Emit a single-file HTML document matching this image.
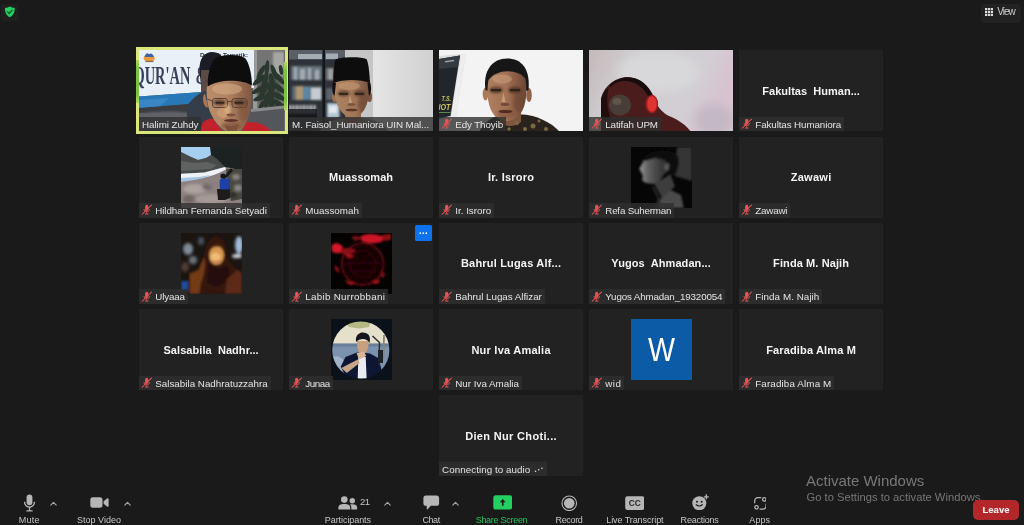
<!DOCTYPE html>
<html lang="id"><head><meta charset="utf-8"><title>Zoom Meeting</title>
<style>
html,body{margin:0;padding:0}
#w{position:absolute;left:0;top:0;width:1024px;height:525px;will-change:transform}
body{width:1024px;height:525px;overflow:hidden;background:#1a1a1a;position:relative;font-family:"Liberation Sans",sans-serif;color:#fff}
.tile{position:absolute;width:144.7px;height:81.2px;background:#222222;overflow:hidden}
.tile svg.pic{position:absolute;left:0;top:0}
.name{position:absolute;left:0;right:0;top:33.7px;height:14px;line-height:14px;text-align:center;font-weight:bold;font-size:11px;color:#f4f4f4;white-space:pre}
.lab{position:absolute;left:0;bottom:0;height:14.6px;line-height:16.6px;background:rgba(48,48,48,.8);font-size:9.8px;color:#e4e4e4;padding:0 3px 0 16.5px;white-space:nowrap}
.lab.nomic{padding-left:3.3px}
.lab svg.mic{position:absolute;left:2.3px;top:1.3px;width:11.4px;height:11.4px}
.av{position:absolute;left:42.2px;top:10.2px;width:61px;height:61px;overflow:hidden}
.tb{position:absolute;top:514.4px;height:12px;line-height:12px;font-size:9px;color:#c6c6c6;white-space:nowrap;transform:translateX(-50%)}
.ic{position:absolute}
</style></head><body><div id="w">
<div style="position:absolute;left:1px;top:4px;width:17px;height:17px;border-radius:3px;background:#202020"></div>
<svg class="ic" style="left:3.6px;top:6.3px" width="11.6" height="11.6" viewBox="0 0 24 24"><path d="M12 0.800C9.500 2.600 6 3.600 3 3.600C2.200 3.600 1.800 4 1.800 4.800C1.900 13 4.200 19.500 12 23.400C19.800 19.500 22.100 13 22.200 4.800C22.200 4 21.800 3.600 21 3.600C18 3.600 14.500 2.600 12 0.800z" fill="#23d160"/><path d="M7.300 12l3.500 3.500 6-7" fill="none" stroke="#155a30" stroke-width="2.700" stroke-linecap="round" stroke-linejoin="round"/></svg>
<div style="position:absolute;left:981px;top:3.5px;width:40px;height:19px;border-radius:4px;background:#222222"></div>
<svg class="ic" style="left:985px;top:8.2px" width="8.3" height="8" viewBox="0 0 8.300 8"><g fill="#dcdcdc"><rect x="0.0" y="0.0" width="2.300" height="2.200"/><rect x="3.0" y="0.0" width="2.300" height="2.200"/><rect x="6.0" y="0.0" width="2.300" height="2.200"/><rect x="0.0" y="2.9" width="2.300" height="2.200"/><rect x="3.0" y="2.9" width="2.300" height="2.200"/><rect x="6.0" y="2.9" width="2.300" height="2.200"/><rect x="0.0" y="5.8" width="2.300" height="2.200"/><rect x="3.0" y="5.8" width="2.300" height="2.200"/><rect x="6.0" y="5.8" width="2.300" height="2.200"/></g></svg>
<div style="position:absolute;left:997.2px;top:6.1px;height:12px;line-height:12px;font-size:10px;letter-spacing:-0.97px;color:#cfcfcf">View</div>
<div class="tile" style="left:138.75px;top:50.30px;width:146px;background:#6a6c6c"><svg class="pic" width="145" height="82" viewBox="0 0 145 82"><defs><filter id="b1a" x="-20%" y="-20%" width="140%" height="140%"><feGaussianBlur stdDeviation="0.5"/></filter><filter id="b1b" x="-20%" y="-20%" width="140%" height="140%"><feGaussianBlur stdDeviation="1.2"/></filter><filter id="b1c" x="-20%" y="-20%" width="140%" height="140%"><feGaussianBlur stdDeviation="2.2"/></filter>
<linearGradient id="g1f" x1="0" x2="1"><stop offset="0" stop-color="#ba8e6a"/><stop offset=".45" stop-color="#b18362"/><stop offset="1" stop-color="#805840"/></linearGradient><clipPath id="cf1"><path d="M68.500 33C66.500 44 68 56 72 64C76 72 82 80 90 82H100C106 78 110 68 111.500 58C113 48 113 40 112 33C100 27 80 27 68.500 33z"/></clipPath></defs>
<rect width="145" height="82" fill="#56585e"/>
<rect x="114" y="0" width="31" height="82" fill="#747474"/>
<rect x="134" y="2" width="11" height="24" fill="#a6a6a2" filter="url(#b1b)"/>
<rect x="114" y="0" width="4" height="60" fill="#9a9a98"/>
<path d="M0 0H115V38L63 42L0 46.500z" fill="#e9f0f7"/>
<path d="M0 46.500L63 42L50 54L0 58z" fill="#2878b8"/>
<path d="M0 50L30 48L20 57L0 58z" fill="#3a86c4"/>
<path d="M0 58L50 54L62 56V64L0 63z" fill="#3a3c42"/>
<path d="M0 64C20 60 45 61 62 65V82H0z" fill="#606268" filter="url(#b1b)"/>
<g filter="url(#b1a)" fill="#2b372e"><ellipse cx="122" cy="22" rx="8" ry="2.4" transform="rotate(-60 122 22)"/><ellipse cx="128" cy="18" rx="8" ry="2.2" transform="rotate(-85 128 18)"/><ellipse cx="135" cy="22" rx="8" ry="2.4" transform="rotate(-110 135 22)"/><ellipse cx="140" cy="28" rx="8" ry="2.5" transform="rotate(-130 140 28)"/><ellipse cx="120" cy="30" rx="8" ry="2.5" transform="rotate(-40 120 30)"/><ellipse cx="126" cy="30" rx="9" ry="2.6" transform="rotate(-75 126 30)"/><ellipse cx="133" cy="32" rx="9" ry="2.8" transform="rotate(-100 133 32)"/><ellipse cx="140" cy="38" rx="8" ry="2.6" transform="rotate(-140 140 38)"/><ellipse cx="119" cy="40" rx="7" ry="2.4" transform="rotate(-30 119 40)"/><ellipse cx="125" cy="40" rx="9" ry="2.8" transform="rotate(-60 125 40)"/><ellipse cx="132" cy="42" rx="9" ry="3" transform="rotate(-95 132 42)"/><ellipse cx="139" cy="46" rx="8" ry="2.8" transform="rotate(-150 139 46)"/><ellipse cx="121" cy="48" rx="7" ry="2.4" transform="rotate(-20 121 48)"/><ellipse cx="128" cy="50" rx="8" ry="3" transform="rotate(-80 128 50)"/><ellipse cx="136" cy="52" rx="8" ry="2.6" transform="rotate(-160 136 52)"/><ellipse cx="142" cy="20" rx="5" ry="2" transform="rotate(-100 142 20)"/><ellipse cx="124" cy="54" rx="6" ry="2.4" transform="rotate(-45 124 54)"/><ellipse cx="133" cy="56" rx="6" ry="2.4" transform="rotate(-120 133 56)"/><ellipse cx="141" cy="56" rx="5" ry="2.2" transform="rotate(-10 141 56)"/></g><g filter="url(#b1b)" fill="#2b372e" opacity=".55"><ellipse cx="130" cy="42" rx="12" ry="17"/></g>
<path d="M112 60L145 56V82H112z" fill="#54565c"/>
<path d="M112 59L145 55.500V58.500L112 62z" fill="#8a8a8c" filter="url(#b1a)"/>
<text x="-5.500" y="33.600" font-family="Liberation Serif,serif" font-size="24.700" font-weight="bold" fill="#364159" textLength="56.800" lengthAdjust="spacingAndGlyphs">QUR'AN</text>
<text x="56.500" y="33.600" font-family="Liberation Serif,serif" font-size="24.700" font-weight="bold" fill="#364159" textLength="13" lengthAdjust="spacingAndGlyphs">&amp;</text>
<text x="61" y="6.500" font-family="Liberation Sans,sans-serif" font-size="5.200" font-weight="bold" fill="#2e3444" textLength="48" lengthAdjust="spacingAndGlyphs">Daurah Tematik:</text>
<g filter="url(#b1a)"><ellipse cx="10.200" cy="8.300" rx="5.600" ry="3.600" fill="#e89a3c"/><path d="M5.500 7C6.500 3 9 2.500 10 4.500C11.500 2.500 14 3.500 15 7z" fill="#3c64a0"/><rect x="6.500" y="10.800" width="8" height="1.300" fill="#8a6a50"/></g>
<g filter="url(#b1a)">
<path d="M60.500 20C60 8 66 2 73 2C80 2 84 6 85 12V36H62z" fill="#1b1d25"/>
<path d="M62 20h10v22h-10z" fill="#5a4a44"/>
<path d="M47 82L48.500 55C54 48 60 43 66 41H74V82z" fill="#343c4a"/>
</g>
<g filter="url(#b1a)">
<path d="M61 82L63.500 73C66 70 71 68 74 69L84 82z" fill="#c4222c"/>
<path d="M103 82L107 72L117 72.500C124 74 130 78 133 82z" fill="#c4222c"/>
<path d="M66 44C64 44 63.500 50 65 54C66 57 68 58 69 57z" fill="#a87858"/>
<path d="M68.500 33C66.500 44 68 56 72 64C76 72 82 80 90 82H100C106 78 110 68 111.500 58C113 48 113 40 112 33C100 27 80 27 68.500 33z" fill="url(#g1f)"/>
<ellipse cx="88" cy="39" rx="15" ry="5.500" fill="#d4ac84" opacity=".6"/>
<ellipse cx="84" cy="63" rx="6" ry="5" fill="#d2a078" opacity=".7"/>
<path d="M68.500 36.500C68.600 25 71.500 12 76.500 8C84 4 100 4 106 8C110.500 13 113 26 113 35.500C103 29 80 29 68.500 36.500z" fill="#0b0b0f"/>
<path d="M86 75c4 1.500 9 1.500 13-.5L98 82H88z" fill="#7e5440"/>
</g>
<g fill="none" stroke="#4a3a34" stroke-width="1" opacity=".85"><rect x="73.500" y="48.500" width="15" height="9" rx="2.500"/><rect x="93" y="48.500" width="15" height="9" rx="2.500"/><path d="M88.500 51.500h4.500M73.500 51L68 49"/></g>
<g clip-path="url(#cf1)"><g filter="url(#b1b)"><ellipse cx="80.500" cy="52.500" rx="6.500" ry="3" fill="#4a2e22" opacity=".75"/><ellipse cx="100.500" cy="52.500" rx="6.500" ry="3" fill="#4a2e22" opacity=".75"/><ellipse cx="92" cy="76" rx="10" ry="4" fill="#7c4e38" opacity=".6"/><ellipse cx="104" cy="62" rx="5" ry="9" fill="#7a4e38" opacity=".45"/><ellipse cx="89" cy="60" rx="3" ry="5" fill="#e0b684" opacity=".7"/></g></g>
<g fill="#33221c" filter="url(#b1a)"><rect x="77" y="52" width="8" height="1.600"/><rect x="96" y="52" width="8" height="1.600"/><ellipse cx="92" cy="70.500" rx="7" ry="1.500" fill="#5e3226"/><ellipse cx="92" cy="65" rx="4.500" ry="1.400" fill="#7e523e"/></g>
</svg><div class="lab nomic" style="letter-spacing:-0.07px">Halimi Zuhdy</div></div>
<div class="tile" style="left:288.75px;top:50.30px"><svg class="pic" width="145" height="82" viewBox="0 0 145 82"><defs><filter id="b2a" x="-20%" y="-20%" width="140%" height="140%"><feGaussianBlur stdDeviation="0.5"/></filter><filter id="b2c" x="-20%" y="-20%" width="140%" height="140%"><feGaussianBlur stdDeviation="0.9"/></filter><filter id="b2b" x="-20%" y="-20%" width="140%" height="140%"><feGaussianBlur stdDeviation="1.2"/></filter>
<linearGradient id="g2" x1="0" x2="1"><stop offset="0" stop-color="#c4c4c4"/><stop offset=".3" stop-color="#dedede"/><stop offset=".6" stop-color="#e4e4e4"/><stop offset="1" stop-color="#d0d0d0"/></linearGradient>
<linearGradient id="g2f" x1="0" x2="1"><stop offset="0" stop-color="#ae8464"/><stop offset=".6" stop-color="#a07456"/><stop offset="1" stop-color="#70503c"/></linearGradient><clipPath id="cf2"><path d="M45 30C44 44 47 54 52 61C56 66 60 68 63 68C67 68 71 66 75 60C79 53 81.500 43 80.500 30C70 26 54 26 45 30z"/></clipPath></defs>
<rect width="145" height="82" fill="url(#g2)"/>
<rect x="55" y="0" width="29" height="82" fill="#c6c6c6"/>
<rect x="0" y="0" width="56" height="82" fill="#2e3238"/>
<rect x="0" y="0" width="56" height="9.500" fill="#5a5e66"/>
<g fill="#a4acb4" filter="url(#b2a)"><rect x="9" y="4" width="24" height="5"/><rect x="37" y="3.500" width="12" height="5.500"/></g>
<g filter="url(#b2c)">
<rect x="2" y="16" width="31" height="14" fill="#67727a"/><rect x="37" y="18" width="14" height="12" fill="#7e7a74"/>
<g fill="#a2acb4"><rect x="5" y="17" width="3" height="13"/><rect x="11" y="19" width="5" height="11"/><rect x="19" y="18" width="3" height="12"/><rect x="26" y="20" width="4" height="10"/><rect x="40" y="19" width="3" height="11"/></g>
<rect x="3" y="36" width="30" height="14" fill="#5e6a72"/>
<rect x="7" y="36" width="7" height="14" fill="#ab9670"/><rect x="14.500" y="37" width="6" height="13" fill="#5a88aa"/><rect x="22" y="38" width="10" height="12" fill="#c4ccd2"/><rect x="37" y="38" width="8" height="12" fill="#5a626a"/>
<g fill="#d4d8dc"><rect x="0" y="55" width="2" height="9"/><rect x="3.500" y="55" width="2" height="9"/><rect x="7" y="55" width="2" height="9"/><rect x="10.500" y="55" width="2" height="9"/><rect x="14" y="55" width="2" height="9"/><rect x="17.500" y="55" width="2" height="9"/><rect x="21" y="55" width="2" height="9"/><rect x="24.500" y="55" width="2" height="9"/></g>
<rect x="38" y="53" width="12.500" height="15" fill="#b4c6d2"/><rect x="40" y="56" width="8" height="7" fill="#e4eaee"/>
</g>
<rect x="0" y="59" width="28" height="9" fill="#0c0e10" opacity=".75"/>
<rect x="33.500" y="0" width="2.500" height="82" fill="#14161a"/>
<g filter="url(#b2a)">
<path d="M30 82C34 74 44 69 56 68H72C84 68 94 73 100 82z" fill="#8c8884"/>
<path d="M56 62h16v10C68 75 60 75 56 72z" fill="#966c50"/>
<ellipse cx="45.500" cy="47" rx="2.500" ry="5" fill="#9a7052"/><ellipse cx="80.500" cy="47" rx="2.500" ry="5" fill="#7a5640"/>
<path d="M45 30C44 44 47 54 52 61C56 66 60 68 63 68C67 68 71 66 75 60C79 53 81.500 43 80.500 30C70 26 54 26 45 30z" fill="url(#g2f)"/>
<ellipse cx="60" cy="36" rx="11" ry="4" fill="#c49872" opacity=".6"/>
<path d="M44.300 33C44.300 22 45 13 46.500 9.500C52 6.500 72 6.500 77.500 9C79.500 13 80.500 22 81 33C72 29 54 29 44.300 33z" fill="#0a0a0d"/>
<path d="M44 32C42.500 38 43.500 44 45.500 46L47 33z" fill="#14100e"/><path d="M81 32C83 38 82 44 80 46L78.500 33z" fill="#14100e"/>
</g>
<g clip-path="url(#cf2)"><g filter="url(#b2b)"><ellipse cx="54.500" cy="43.500" rx="6" ry="3" fill="#4a3024" opacity=".7"/><ellipse cx="70.500" cy="43.500" rx="6" ry="3" fill="#4a3024" opacity=".7"/><ellipse cx="74" cy="54" rx="5" ry="9" fill="#6a4430" opacity=".5"/></g></g>
<g fill="#2e201a" filter="url(#b2a)"><rect x="50" y="43" width="9" height="1.800"/><rect x="66" y="43" width="9" height="1.800"/><ellipse cx="62.500" cy="60" rx="6" ry="1.300" fill="#5a3428"/><ellipse cx="62.500" cy="54.500" rx="4" ry="1.300" fill="#7a523c"/><path d="M61 45L59.500 53h3.500z" fill="#c49a74"/></g>
</svg><div class="lab nomic" style="right:0;letter-spacing:-0.08px">M. Faisol_Humaniora UIN Mal...</div></div>
<div class="tile" style="left:438.75px;top:50.30px"><svg class="pic" width="145" height="82" viewBox="0 0 145 82"><defs><filter id="b3a" x="-20%" y="-20%" width="140%" height="140%"><feGaussianBlur stdDeviation="0.5"/></filter><filter id="b3b" x="-20%" y="-20%" width="140%" height="140%"><feGaussianBlur stdDeviation="1.2"/></filter>
<linearGradient id="g3f" x1="0" x2="1"><stop offset="0" stop-color="#ae7e60"/><stop offset=".5" stop-color="#a27054"/><stop offset="1" stop-color="#6c4534"/></linearGradient><clipPath id="cf3"><path d="M49.500 30C47 44 49 57 55 65C60 70 64 71 68 71C73 71 78 69 82 63C87 55 88.500 42 86.500 29C80 19 58 18 49.500 30z"/></clipPath></defs>
<rect width="145" height="82" fill="#f3f3f3"/>
<g filter="url(#b3a)">
<path d="M0 6L27 3.500L17 67L0 70z" fill="#dcdcdc"/>
<path d="M22 4L27 3.500L17 67L12 67z" fill="#ededed"/>
<path d="M0 9L21 5.500L11.500 66L0 68.500z" fill="#23282c"/>
<path d="M0 9L21 5.500L19 17L0 19z" fill="#353b40"/>
<rect x="6" y="11" width="9" height="1.500" fill="#9aa0a4" transform="rotate(-8 6 11)"/>
</g>
<text x="2.500" y="50.800" font-family="Liberation Sans,sans-serif" font-weight="bold" font-style="italic" font-size="8" fill="#c9c060" textLength="9.500" lengthAdjust="spacingAndGlyphs">T.S.</text>
<text x="-0.500" y="59.800" font-family="Liberation Sans,sans-serif" font-weight="bold" font-style="italic" font-size="8.500" fill="#c9c060" textLength="12" lengthAdjust="spacingAndGlyphs">IOT</text>
<rect x="0" y="62" width="11.500" height="1" fill="#5a8a4a"/>
<g filter="url(#b3a)">
<path d="M40 82C45 72 54 66 64 64.500H84C96 65 112 72 121 82z" fill="#2c231b"/>
<path d="M61 62h21v10C77 77 66 77 61 73z" fill="#7e543e"/>
<ellipse cx="46.500" cy="44" rx="2.800" ry="6.500" fill="#a87a5a"/><ellipse cx="90" cy="45" rx="2.800" ry="7" fill="#8e6448"/>
<path d="M46.500 40C43.500 20 54 8.500 68 8.500C82 8.500 91.500 18 89.500 40L80 44H56z" fill="#191817"/>
<path d="M49.500 30C47 44 49 57 55 65C60 70 64 71 68 71C73 71 78 69 82 63C87 55 88.500 42 86.500 29C80 19 58 18 49.500 30z" fill="url(#g3f)"/>
<ellipse cx="63" cy="29" rx="10" ry="4.500" fill="#c89c7c" opacity=".6"/>

</g>
<g clip-path="url(#cf3)"><g filter="url(#b3b)"><ellipse cx="57" cy="40" rx="7" ry="3.500" fill="#4a3024" opacity=".7"/><ellipse cx="76" cy="40" rx="7" ry="3.500" fill="#4a3024" opacity=".7"/><ellipse cx="80" cy="52" rx="6" ry="10" fill="#6a4430" opacity=".5"/><ellipse cx="67" cy="64" rx="9" ry="4" fill="#7c4e38" opacity=".5"/></g></g>
<g fill="#2e201a" filter="url(#b3a)"><rect x="52" y="39" width="10" height="2.200"/><rect x="71" y="39" width="10" height="2.200"/><ellipse cx="66.500" cy="61.500" rx="7" ry="1.600" fill="#522c22"/><ellipse cx="66" cy="54.500" rx="4.500" ry="1.400" fill="#70483a"/><path d="M64.500 42L62.500 52h4z" fill="#c49a74"/></g>
<g fill="#7a6844" filter="url(#b3a)"><circle cx="60" cy="76" r="2"/><circle cx="78" cy="73" r="2"/><circle cx="94" cy="76" r="2.500"/><circle cx="107" cy="79" r="2"/><circle cx="52" cy="79" r="1.500"/><circle cx="86" cy="79" r="2"/><circle cx="70" cy="79" r="1.800"/><circle cx="100" cy="71" r="1.500"/></g>
</svg><div class="lab" style="letter-spacing:-0.11px"><svg class="mic" viewBox="0 0 12 12" width="12" height="12"><g fill="#e25555"><rect x="4.300" y="0.900" width="3.400" height="6.200" rx="1.700"/><path d="M2.700 5.200h.9c0 1.500 1 2.500 2.400 2.500s2.400-1 2.400-2.500h.9c0 1.800-1.200 3.100-2.850 3.300V10.100h1.400v.9H4.150v-.9h1.400V8.500C3.900 8.300 2.700 7 2.700 5.200z"/></g><path d="M1.200 10.800L11 1.200" stroke="#e25555" stroke-width="1.100" stroke-linecap="round"/></svg>Edy Thoyib</div></div>
<div class="tile" style="left:588.75px;top:50.30px"><svg class="pic" width="145" height="82" viewBox="0 0 145 82"><defs><filter id="b4a" x="-20%" y="-20%" width="140%" height="140%"><feGaussianBlur stdDeviation="0.6"/></filter><filter id="b4b" x="-20%" y="-20%" width="140%" height="140%"><feGaussianBlur stdDeviation="5"/></filter>
<linearGradient id="g4" x1="0" x2="1" y1="0" y2=".25"><stop offset="0" stop-color="#c4b9ba"/><stop offset=".3" stop-color="#d0cdd0"/><stop offset=".8" stop-color="#d2ced4"/><stop offset="1" stop-color="#d8c2d0"/></linearGradient></defs>
<rect width="145" height="82" fill="url(#g4)"/>
<ellipse cx="70" cy="22" rx="40" ry="20" fill="#d8d8da" filter="url(#b4b)"/>
<ellipse cx="125" cy="70" rx="20" ry="16" fill="#c4b8c4" filter="url(#b4b)"/>
<g filter="url(#b4a)">
<path d="M12 82L12 50C13 40 22 29 36 27C50 26 60 36 65 47C68 56 72 62 80 66C90 70 98 76 102 82z" fill="#4b1c1e"/>
<path d="M12 70V50C13 44 16 40 20 37C17 46 18 58 22 70z" fill="#221010"/>
<path d="M20 36C28 27 42 25 52 31C58 35 62 41 64 47L60.500 48.500C56 38 46 31 36 31C30 31 25 33 22 37z" fill="#120c0c"/>
<ellipse cx="31" cy="55" rx="11" ry="10.500" fill="#4a3e38"/>
<ellipse cx="28" cy="51.500" rx="4.500" ry="3.500" fill="#605448"/>
<path d="M20 62C24 68 36 70 42 64L44 72H22z" fill="#3a2420"/>
<ellipse cx="62.800" cy="54" rx="6.300" ry="9.300" fill="#a01c20"/>
<ellipse cx="63" cy="54" rx="4.800" ry="7.800" fill="#dc3430"/>
</g>
</svg><div class="lab" style="letter-spacing:-0.12px"><svg class="mic" viewBox="0 0 12 12" width="12" height="12"><g fill="#e25555"><rect x="4.300" y="0.900" width="3.400" height="6.200" rx="1.700"/><path d="M2.700 5.200h.9c0 1.500 1 2.500 2.400 2.500s2.400-1 2.400-2.500h.9c0 1.800-1.200 3.100-2.850 3.300V10.100h1.400v.9H4.150v-.9h1.400V8.500C3.900 8.300 2.700 7 2.700 5.200z"/></g><path d="M1.200 10.800L11 1.200" stroke="#e25555" stroke-width="1.100" stroke-linecap="round"/></svg>Latifah UPM</div></div>
<div class="tile" style="left:738.75px;top:50.30px"><div class="name" style="letter-spacing:0.02px">Fakultas  Human...</div><div class="lab" style="letter-spacing:-0.10px"><svg class="mic" viewBox="0 0 12 12" width="12" height="12"><g fill="#e25555"><rect x="4.300" y="0.900" width="3.400" height="6.200" rx="1.700"/><path d="M2.700 5.200h.9c0 1.500 1 2.500 2.400 2.500s2.400-1 2.400-2.500h.9c0 1.800-1.200 3.100-2.850 3.300V10.100h1.400v.9H4.150v-.9h1.400V8.500C3.900 8.300 2.700 7 2.700 5.200z"/></g><path d="M1.200 10.800L11 1.200" stroke="#e25555" stroke-width="1.100" stroke-linecap="round"/></svg>Fakultas Humaniora</div></div>
<div class="tile" style="left:138.75px;top:136.55px"><div class="av"><svg width="61" height="61" viewBox="0 0 61 61"><defs><filter id="b5a" x="-20%" y="-20%" width="140%" height="140%"><feGaussianBlur stdDeviation="0.6"/></filter><filter id="b5b" x="-20%" y="-20%" width="140%" height="140%"><feGaussianBlur stdDeviation="1.5"/></filter></defs>
<rect width="61" height="61" fill="#867a78"/>
<g filter="url(#b5a)">
<path d="M0 0H30L30 8L25 11L17 13L9 9.600L0 5z" fill="#a6cef0"/>
<path d="M0 5L9 9.600L17 13L25 11L30 8L40 14L44 20L23 25.500L0 27z" fill="#464b4a"/>
<path d="M0 14L14 16L26 15L36 18L30 22L0 24z" fill="#5e6260"/>
<path d="M29 0H61V24L50 21L44 20L36 12L30 8z" fill="#1b2321"/>
<path d="M0 26.700L23.400 25.500L44 20L45.400 22.400L35.600 28L17.300 32.200L0 33.600z" fill="#eef2f6"/>
<path d="M0 31L18 30L30 28L17.300 33.500L0 35.500z" fill="#a4c4e2"/>
<path d="M0 35C14 33 30 31 46 22L61 24V61H0z" fill="#8c8081"/>
<path d="M45 22L61 22V52L50 54L47 40z" fill="#4a4643"/>
<path d="M50 21L43.500 29L41 31L44 32L52 24z" fill="#141a1a"/>
</g>
<g filter="url(#b5b)"><ellipse cx="14" cy="42" rx="12" ry="5" fill="#ada29e"/><ellipse cx="30" cy="52" rx="16" ry="5" fill="#a69a96"/><ellipse cx="8" cy="52" rx="6" ry="4" fill="#6e6662"/><ellipse cx="26" cy="40" rx="5" ry="3" fill="#70686a"/><ellipse cx="55" cy="30" rx="4" ry="3" fill="#8a8680"/><ellipse cx="57" cy="41" rx="4" ry="3.500" fill="#8c8884"/><ellipse cx="52" cy="48" rx="4" ry="3" fill="#2e2c2a"/></g>
<g filter="url(#b5a)">
<path d="M36 42h13v9L44 53H37z" fill="#1c1c1e"/>
<rect x="38.700" y="31.500" width="10.300" height="11" rx="2.500" fill="#1e40a4"/>
<circle cx="42" cy="29" r="2.600" fill="#14171a"/>
</g></svg></div><div class="lab" style="letter-spacing:-0.07px"><svg class="mic" viewBox="0 0 12 12" width="12" height="12"><g fill="#e25555"><rect x="4.300" y="0.900" width="3.400" height="6.200" rx="1.700"/><path d="M2.700 5.200h.9c0 1.500 1 2.500 2.400 2.500s2.400-1 2.400-2.500h.9c0 1.800-1.200 3.100-2.850 3.300V10.100h1.400v.9H4.150v-.9h1.400V8.500C3.900 8.300 2.700 7 2.700 5.200z"/></g><path d="M1.200 10.800L11 1.200" stroke="#e25555" stroke-width="1.100" stroke-linecap="round"/></svg>Hildhan Fernanda Setyadi</div></div>
<div class="tile" style="left:288.75px;top:136.55px"><div class="name" style="letter-spacing:0.05px">Muassomah</div><div class="lab" style="letter-spacing:0.05px"><svg class="mic" viewBox="0 0 12 12" width="12" height="12"><g fill="#e25555"><rect x="4.300" y="0.900" width="3.400" height="6.200" rx="1.700"/><path d="M2.700 5.200h.9c0 1.500 1 2.500 2.400 2.500s2.400-1 2.400-2.500h.9c0 1.800-1.200 3.100-2.850 3.300V10.100h1.400v.9H4.150v-.9h1.400V8.500C3.900 8.300 2.700 7 2.700 5.200z"/></g><path d="M1.200 10.800L11 1.200" stroke="#e25555" stroke-width="1.100" stroke-linecap="round"/></svg>Muassomah</div></div>
<div class="tile" style="left:438.75px;top:136.55px"><div class="name" style="letter-spacing:0.24px">Ir. Isroro</div><div class="lab" style="letter-spacing:0.00px"><svg class="mic" viewBox="0 0 12 12" width="12" height="12"><g fill="#e25555"><rect x="4.300" y="0.900" width="3.400" height="6.200" rx="1.700"/><path d="M2.700 5.200h.9c0 1.500 1 2.500 2.400 2.500s2.400-1 2.400-2.500h.9c0 1.800-1.200 3.100-2.850 3.300V10.100h1.400v.9H4.150v-.9h1.400V8.500C3.900 8.300 2.700 7 2.700 5.200z"/></g><path d="M1.200 10.800L11 1.200" stroke="#e25555" stroke-width="1.100" stroke-linecap="round"/></svg>Ir. Isroro</div></div>
<div class="tile" style="left:588.75px;top:136.55px"><div class="av"><svg width="61" height="61" viewBox="0 0 61 61"><defs><filter id="b6a" x="-20%" y="-20%" width="140%" height="140%"><feGaussianBlur stdDeviation="1.1"/></filter><filter id="b6b" x="-20%" y="-20%" width="140%" height="140%"><feGaussianBlur stdDeviation="2.2"/></filter>
<linearGradient id="g6" x1="0" x2="1"><stop offset="0" stop-color="#949494"/><stop offset=".3" stop-color="#5e5e5e"/><stop offset=".7" stop-color="#3a3a3a"/><stop offset="1" stop-color="#2c2c2c"/></linearGradient></defs>
<rect width="61" height="61" fill="#060606"/>
<g filter="url(#b6a)">
<path d="M46 0H61V34L44 29z" fill="#363636"/>
<path d="M14.300 10.900L21 7.800L30.700 10.200L35.600 12.700L39.300 17.600L38 23.700L33.200 27.300L28.300 34.600L23.400 37L14.900 35.900L11.200 33.400L11.800 28.500L8.200 21.800L10.600 17.600z" fill="url(#g6)"/>
<path d="M23.400 37L39.300 27.300L44 39.500L30.700 50.500z" fill="#3c3c3c"/>
<path d="M29.500 51.700L39.300 43L50 48L52.700 61H27z" fill="#4c4c4c"/>
<ellipse cx="35.600" cy="20" rx="2.400" ry="3.400" fill="#565656"/>
<path d="M11 14C15 3 34 0 44 6C50 10 48 22 43 30L39 26L40 18L33 13L24 11L15 14z" fill="#080808"/>
<path d="M22 40L28 52L24 61" stroke="#6a6a6a" stroke-width=".8" fill="none"/>
</g></svg></div><div class="lab" style="letter-spacing:-0.20px"><svg class="mic" viewBox="0 0 12 12" width="12" height="12"><g fill="#e25555"><rect x="4.300" y="0.900" width="3.400" height="6.200" rx="1.700"/><path d="M2.700 5.200h.9c0 1.500 1 2.500 2.400 2.500s2.400-1 2.400-2.500h.9c0 1.800-1.200 3.100-2.850 3.300V10.100h1.400v.9H4.150v-.9h1.400V8.500C3.900 8.300 2.700 7 2.700 5.200z"/></g><path d="M1.200 10.800L11 1.200" stroke="#e25555" stroke-width="1.100" stroke-linecap="round"/></svg>Refa Suherman</div></div>
<div class="tile" style="left:738.75px;top:136.55px"><div class="name" style="letter-spacing:0.30px">Zawawi</div><div class="lab" style="letter-spacing:-0.20px"><svg class="mic" viewBox="0 0 12 12" width="12" height="12"><g fill="#e25555"><rect x="4.300" y="0.900" width="3.400" height="6.200" rx="1.700"/><path d="M2.700 5.200h.9c0 1.500 1 2.500 2.400 2.500s2.400-1 2.400-2.500h.9c0 1.800-1.200 3.100-2.850 3.300V10.100h1.400v.9H4.150v-.9h1.400V8.500C3.900 8.300 2.700 7 2.700 5.200z"/></g><path d="M1.200 10.800L11 1.200" stroke="#e25555" stroke-width="1.100" stroke-linecap="round"/></svg>Zawawi</div></div>
<div class="tile" style="left:138.75px;top:222.80px"><div class="av"><svg width="61" height="61" viewBox="0 0 61 61"><defs><filter id="b7a" x="-20%" y="-20%" width="140%" height="140%"><feGaussianBlur stdDeviation="0.8"/></filter><filter id="b7b" x="-20%" y="-20%" width="140%" height="140%"><feGaussianBlur stdDeviation="1.800"/></filter></defs>
<rect width="61" height="61" fill="#1a1511"/>
<g filter="url(#b7b)">
<ellipse cx="7" cy="16" rx="5" ry="6" fill="#7e8a98"/><ellipse cx="12" cy="27" rx="4" ry="4" fill="#6a7078"/><ellipse cx="4" cy="34" rx="4" ry="5" fill="#4e3a30"/>
<ellipse cx="58" cy="12" rx="4" ry="9" fill="#a0bcdc"/><ellipse cx="56" cy="23" rx="5" ry="2" fill="#d4dce4"/><ellipse cx="20" cy="8" rx="3" ry="4" fill="#46525c"/>
</g>
<g filter="url(#b7a)">
<rect x="0" y="48" width="7" height="10" fill="#1e4c9c"/>
<path d="M35.600 3.500C42 5 44.500 10 45 17C46 26 48 31 56 36L61 39.500V61H7.500V39.500L17.500 36L23.500 21C25 11 29 4 35.600 3.500z" fill="#35190c"/>
<path d="M9 61V41L17.500 37L23 24C25 30 24 40 20 50L18 61z" fill="#733a16"/>
<path d="M27 30C32 36 42 36 47 31L50 46L36 54L26 50z" fill="#26110a"/>
<path d="M44 61L46 46L56 37L61 40V61z" fill="#5c2c18"/>
<ellipse cx="35.600" cy="22.300" rx="7.300" ry="9.300" fill="#d89850"/>
<ellipse cx="34.500" cy="25" rx="5" ry="5.500" fill="#f0bc74"/>
<path d="M28 18C29 9 42 8 43.500 17C40 12.500 32 12.500 28 18z" fill="#4a2410"/>
<path d="M31 27.500c2.500 2 6 2 8.500-.3" stroke="#a83c30" stroke-width="1.100" fill="none"/>
</g></svg></div><div class="lab" style="letter-spacing:-0.16px"><svg class="mic" viewBox="0 0 12 12" width="12" height="12"><g fill="#e25555"><rect x="4.300" y="0.900" width="3.400" height="6.200" rx="1.700"/><path d="M2.700 5.200h.9c0 1.500 1 2.500 2.400 2.500s2.400-1 2.400-2.500h.9c0 1.800-1.200 3.100-2.850 3.300V10.100h1.400v.9H4.150v-.9h1.400V8.500C3.900 8.300 2.700 7 2.700 5.200z"/></g><path d="M1.200 10.800L11 1.200" stroke="#e25555" stroke-width="1.100" stroke-linecap="round"/></svg>Ulyaaa</div></div>
<div class="tile" style="left:288.75px;top:222.80px"><div class="av"><svg width="61" height="61" viewBox="0 0 61 61"><defs><filter id="b8a" x="-20%" y="-20%" width="140%" height="140%"><feGaussianBlur stdDeviation="1"/></filter></defs>
<rect width="61" height="61" fill="#050202"/>
<g filter="url(#b8a)">
<circle cx="31.700" cy="31" r="21" fill="#160305" stroke="#5a0c13" stroke-width="1.600"/>
<circle cx="31.700" cy="31" r="13" fill="none" stroke="#3a080c" stroke-width="1.200"/>
<path d="M14 30h35M18 38h27" stroke="#3a080c" stroke-width="1"/>
<path d="M0.500 14C1 10 6 9.500 9 11.500C12 12 12.500 16 11 19C8 21 3 20.500 1 18z" fill="#d4182a"/>
<path d="M10 16C16 14 22 15 25 18C22 21 14 22 10 20z" fill="#8c1019"/>
<path d="M14 21C18 20 22 21 23 24L17 25z" fill="#a0141e"/>
<path d="M29 4C34 0 44 0.500 50 3C54 5 53 9 48 9.500C42 11 35 10 31 8z" fill="#ca1627"/>
<path d="M20 4C24 2 29 3 31 6L24 8z" fill="#7c0e16"/>
<path d="M50 2L60 1V7L53 8z" fill="#8e1019"/>
<path d="M3.500 32C7 33 9 37 8 40L4.500 38z" fill="#861019"/>
<path d="M14 47C18 49 22 50 24 49L22 52C18 52 15 50 14 47z" fill="#a6141f"/>
<path d="M41 48C44 48 47 47 48 46L48 50C45 52 42 51 41 48z" fill="#a6141f"/>
<path d="M50 38L54 40L53 45L50 44z" fill="#76101a"/>
</g></svg></div><div class="lab" style="letter-spacing:0.30px"><svg class="mic" viewBox="0 0 12 12" width="12" height="12"><g fill="#e25555"><rect x="4.300" y="0.900" width="3.400" height="6.200" rx="1.700"/><path d="M2.700 5.200h.9c0 1.500 1 2.500 2.400 2.500s2.400-1 2.400-2.500h.9c0 1.800-1.200 3.100-2.850 3.300V10.100h1.400v.9H4.150v-.9h1.400V8.500C3.900 8.300 2.700 7 2.700 5.200z"/></g><path d="M1.200 10.800L11 1.200" stroke="#e25555" stroke-width="1.100" stroke-linecap="round"/></svg>Labib Nurrobbani</div><div style="position:absolute;left:126.5px;top:2.4px;width:16.5px;height:16.3px;border-radius:1.5px;background:#0e72ed"><svg width="16.5" height="16.3" viewBox="0 0 16.500 16.300"><g fill="#fff"><circle cx="5.200" cy="8.200" r=".85"/><circle cx="8.250" cy="8.200" r=".85"/><circle cx="11.300" cy="8.200" r=".85"/></g></svg></div></div>
<div class="tile" style="left:438.75px;top:222.80px"><div class="name" style="letter-spacing:0.18px">Bahrul Lugas Alf...</div><div class="lab" style="letter-spacing:-0.03px"><svg class="mic" viewBox="0 0 12 12" width="12" height="12"><g fill="#e25555"><rect x="4.300" y="0.900" width="3.400" height="6.200" rx="1.700"/><path d="M2.700 5.200h.9c0 1.500 1 2.500 2.400 2.500s2.400-1 2.400-2.500h.9c0 1.800-1.200 3.100-2.850 3.300V10.100h1.400v.9H4.150v-.9h1.400V8.500C3.900 8.300 2.700 7 2.700 5.200z"/></g><path d="M1.200 10.800L11 1.200" stroke="#e25555" stroke-width="1.100" stroke-linecap="round"/></svg>Bahrul Lugas Alfizar</div></div>
<div class="tile" style="left:588.75px;top:222.80px"><div class="name" style="letter-spacing:0.09px">Yugos  Ahmadan...</div><div class="lab" style="letter-spacing:-0.15px"><svg class="mic" viewBox="0 0 12 12" width="12" height="12"><g fill="#e25555"><rect x="4.300" y="0.900" width="3.400" height="6.200" rx="1.700"/><path d="M2.700 5.200h.9c0 1.500 1 2.500 2.400 2.500s2.400-1 2.400-2.500h.9c0 1.800-1.200 3.100-2.850 3.300V10.100h1.400v.9H4.150v-.9h1.400V8.500C3.900 8.300 2.700 7 2.700 5.200z"/></g><path d="M1.200 10.800L11 1.200" stroke="#e25555" stroke-width="1.100" stroke-linecap="round"/></svg>Yugos Ahmadan_19320054</div></div>
<div class="tile" style="left:738.75px;top:222.80px"><div class="name" style="letter-spacing:0.10px">Finda M. Najih</div><div class="lab" style="letter-spacing:0.07px"><svg class="mic" viewBox="0 0 12 12" width="12" height="12"><g fill="#e25555"><rect x="4.300" y="0.900" width="3.400" height="6.200" rx="1.700"/><path d="M2.700 5.200h.9c0 1.500 1 2.500 2.400 2.500s2.400-1 2.400-2.500h.9c0 1.800-1.200 3.100-2.850 3.300V10.100h1.400v.9H4.150v-.9h1.400V8.500C3.900 8.300 2.700 7 2.700 5.200z"/></g><path d="M1.200 10.800L11 1.200" stroke="#e25555" stroke-width="1.100" stroke-linecap="round"/></svg>Finda M. Najih</div></div>
<div class="tile" style="left:138.75px;top:309.05px"><div class="name" style="letter-spacing:0.06px">Salsabila  Nadhr...</div><div class="lab" style="letter-spacing:0.01px"><svg class="mic" viewBox="0 0 12 12" width="12" height="12"><g fill="#e25555"><rect x="4.300" y="0.900" width="3.400" height="6.200" rx="1.700"/><path d="M2.700 5.200h.9c0 1.500 1 2.500 2.400 2.500s2.400-1 2.400-2.500h.9c0 1.800-1.200 3.100-2.850 3.300V10.100h1.400v.9H4.150v-.9h1.400V8.500C3.900 8.300 2.700 7 2.700 5.200z"/></g><path d="M1.200 10.800L11 1.200" stroke="#e25555" stroke-width="1.100" stroke-linecap="round"/></svg>Salsabila Nadhratuzzahra</div></div>
<div class="tile" style="left:288.75px;top:309.05px"><div class="av"><svg width="61" height="61" viewBox="0 0 61 61"><defs><filter id="b9a" x="-20%" y="-20%" width="140%" height="140%"><feGaussianBlur stdDeviation="0.6"/></filter><clipPath id="c9"><circle cx="29.800" cy="31" r="28.600"/></clipPath></defs>
<rect width="61" height="61" fill="#0b1119"/>
<g clip-path="url(#c9)"><g filter="url(#b9a)">
<rect width="61" height="25" fill="#e4e0cc"/>
<path d="M14 2H40L38 8L28 9.500L18 8z" fill="#b6b884"/>
<rect y="24.600" width="61" height="37" fill="#7a92ae"/>
<rect y="24.600" width="61" height="3" fill="#687f9a"/>
<path d="M0 38C6 36 12 38 14 44L10 56L0 56z" fill="#9fb2c6"/>
<path d="M9.700 47.800L14.500 38L26.700 33.200L39 34.400L47.500 39.300L51 52.700L39 61H17z" fill="#0c1230"/>
<path d="M27.300 38h7.400l1 23h-9z" fill="#e8ecf0"/>
<path d="M10.300 49L26.700 40.500L28.600 44L15.800 54z" fill="#c8a488"/>
<path d="M26 22C26 33 29 35 31.500 35C35 35 37.700 31 37.700 22z" fill="#c8a080"/>
<path d="M25 23C24 15 30 13 33 13.700C38 14 40 18 38.500 24C36 19 29 19 25 23z" fill="#12161e"/>
<path d="M25.500 34L33 32.500L35.300 37L28 40.500z" fill="#d8b498"/>
<path d="M41.500 17L48.500 23.500L48 46" stroke="#2e2e28" stroke-width="1.500" fill="none"/>
<path d="M53 16L52.500 40" stroke="#8a8478" stroke-width="1.800" fill="none"/>
<rect x="47" y="31" width="5" height="13" fill="#1c2028"/>
</g></g></svg></div><div class="lab" style="letter-spacing:-0.43px"><svg class="mic" viewBox="0 0 12 12" width="12" height="12"><g fill="#e25555"><rect x="4.300" y="0.900" width="3.400" height="6.200" rx="1.700"/><path d="M2.700 5.200h.9c0 1.500 1 2.500 2.400 2.500s2.400-1 2.400-2.500h.9c0 1.800-1.200 3.100-2.850 3.300V10.100h1.400v.9H4.150v-.9h1.400V8.500C3.900 8.300 2.700 7 2.700 5.200z"/></g><path d="M1.200 10.800L11 1.200" stroke="#e25555" stroke-width="1.100" stroke-linecap="round"/></svg>Junaa</div></div>
<div class="tile" style="left:438.75px;top:309.05px"><div class="name" style="letter-spacing:0.24px">Nur Iva Amalia</div><div class="lab" style="letter-spacing:0.00px"><svg class="mic" viewBox="0 0 12 12" width="12" height="12"><g fill="#e25555"><rect x="4.300" y="0.900" width="3.400" height="6.200" rx="1.700"/><path d="M2.700 5.200h.9c0 1.500 1 2.500 2.400 2.500s2.400-1 2.400-2.500h.9c0 1.800-1.200 3.100-2.850 3.300V10.100h1.400v.9H4.150v-.9h1.400V8.500C3.900 8.300 2.700 7 2.700 5.200z"/></g><path d="M1.200 10.800L11 1.200" stroke="#e25555" stroke-width="1.100" stroke-linecap="round"/></svg>Nur Iva Amalia</div></div>
<div class="tile" style="left:588.75px;top:309.05px"><div class="av"><svg width="61" height="61" viewBox="0 0 61 61"><rect width="61" height="61" fill="#0c5ba7"/><text x="30.500" y="42" text-anchor="middle" font-family="Liberation Sans,sans-serif" font-size="33" fill="#fff" textLength="27" lengthAdjust="spacingAndGlyphs">W</text></svg></div><div class="lab" style="letter-spacing:0.45px"><svg class="mic" viewBox="0 0 12 12" width="12" height="12"><g fill="#e25555"><rect x="4.300" y="0.900" width="3.400" height="6.200" rx="1.700"/><path d="M2.700 5.200h.9c0 1.500 1 2.500 2.400 2.500s2.400-1 2.400-2.500h.9c0 1.800-1.200 3.100-2.850 3.300V10.100h1.400v.9H4.150v-.9h1.400V8.500C3.900 8.300 2.700 7 2.700 5.200z"/></g><path d="M1.200 10.800L11 1.200" stroke="#e25555" stroke-width="1.100" stroke-linecap="round"/></svg>wid</div></div>
<div class="tile" style="left:738.75px;top:309.05px"><div class="name" style="letter-spacing:0.15px">Faradiba Alma M</div><div class="lab" style="letter-spacing:0.14px"><svg class="mic" viewBox="0 0 12 12" width="12" height="12"><g fill="#e25555"><rect x="4.300" y="0.900" width="3.400" height="6.200" rx="1.700"/><path d="M2.700 5.200h.9c0 1.500 1 2.500 2.400 2.500s2.400-1 2.400-2.500h.9c0 1.800-1.200 3.100-2.850 3.300V10.100h1.400v.9H4.150v-.9h1.400V8.500C3.900 8.300 2.700 7 2.700 5.200z"/></g><path d="M1.200 10.800L11 1.200" stroke="#e25555" stroke-width="1.100" stroke-linecap="round"/></svg>Faradiba Alma M</div></div>
<div class="tile" style="left:438.75px;top:395.30px"><div class="name" style="letter-spacing:0.33px">Dien Nur Choti...</div><div class="lab nomic" style="letter-spacing:0.06px">Connecting to audio<svg width="13" height="8" viewBox="0 0 13 8" style="margin-left:1px"><g fill="#e4e4e4"><circle cx="4.500" cy="6.300" r=".8"/><circle cx="7.700" cy="4.800" r=".8"/><circle cx="10.900" cy="3.300" r=".8"/></g></svg></div></div>
<div style="position:absolute;left:135.6px;top:46.8px;width:146px;height:81.2px;border:3px solid #dbe67c"></div>
<div style="position:absolute;left:135.6px;top:60px;width:3px;height:43px;background:linear-gradient(#b4d860,#7cc242 20%,#7cc242 80%,#b4d860)"></div><div style="position:absolute;left:283.6px;top:62px;width:3px;height:48px;background:linear-gradient(#b4d860,#7cc242 20%,#7cc242 80%,#b4d860)"></div>
<svg class="ic" style="left:22.800px;top:493.600px" width="13" height="18.200" viewBox="0 0 13 18.200"><g fill="#b6b6b6"><rect x="3.600" y="0.400" width="5.800" height="10.800" rx="2.900"/><path d="M0.900 7.800h1.300c0 2.900 1.900 4.700 4.300 4.700s4.300-1.800 4.300-4.700h1.300c0 3.300-2.100 5.500-4.950 5.900V16.300h2.500v1.300H3.350v-1.300h2.500V13.700C3 13.300 0.900 11.100 0.900 7.800z"/></g></svg>
<svg class="ic" style="left:49.8px;top:500.6px" width="7" height="5" viewBox="0 0 7 5"><path d="M0.800 4.100L3.500 1.300L6.200 4.100" fill="none" stroke="#a6a6a6" stroke-width="1.150" stroke-linecap="round" stroke-linejoin="round"/></svg><div class="tb" style="left:29.3px;letter-spacing:0.33px">Mute</div>
<svg class="ic" style="left:90px;top:497.300px" width="19" height="11" viewBox="0 0 19 11"><g fill="#b6b6b6"><rect x="0.300" y="0.300" width="12.200" height="10.400" rx="2.600"/><path d="M13.600 4.200L17.300 1.300C17.900 0.900 18.600 1.300 18.600 2V9C18.600 9.700 17.900 10.100 17.300 9.700L13.600 6.800z"/></g></svg>
<svg class="ic" style="left:124.2px;top:500.6px" width="7" height="5" viewBox="0 0 7 5"><path d="M0.800 4.100L3.500 1.300L6.200 4.100" fill="none" stroke="#a6a6a6" stroke-width="1.150" stroke-linecap="round" stroke-linejoin="round"/></svg><div class="tb" style="left:99.0px;letter-spacing:0.03px">Stop Video</div>
<svg class="ic" style="left:338px;top:496px" width="19.500" height="14" viewBox="0 0 19.500 14"><g fill="#b6b6b6"><circle cx="6.300" cy="3.600" r="3.300"/><path d="M0.400 13.600V11.500C0.400 9 2.600 8 6.300 8s5.900 1 5.900 3.500v2.100z"/><circle cx="14.300" cy="4.800" r="2.700"/><path d="M13.300 13.600V11.300c0-1.200-.5-2.100-1.300-2.700.7-.2 1.500-.3 2.300-.3 3 0 4.800.9 4.800 3v2.300z"/></g></svg>
<div style="position:absolute;left:360px;top:495.500px;font-size:9.600px;line-height:12px;letter-spacing:-.5px;color:#c4c4c4">21</div>
<svg class="ic" style="left:384.3px;top:500.6px" width="7" height="5" viewBox="0 0 7 5"><path d="M0.800 4.100L3.500 1.300L6.200 4.100" fill="none" stroke="#a6a6a6" stroke-width="1.150" stroke-linecap="round" stroke-linejoin="round"/></svg><div class="tb" style="left:347.9px;letter-spacing:-0.07px">Participants</div>
<svg class="ic" style="left:423px;top:495.300px" width="16.500" height="15" viewBox="0 0 16.500 15"><path d="M2.800 0.400H13.700C15 0.400 16.100 1.500 16.100 2.800V8.400C16.100 9.700 15 10.800 13.700 10.800H7.800L4.400 14.400C4.100 14.700 3.700 14.500 3.700 14.100V10.800H2.800C1.500 10.800 0.400 9.700 0.400 8.400V2.800C0.400 1.500 1.500 0.400 2.800 0.400z" fill="#b6b6b6"/></svg>
<svg class="ic" style="left:452.2px;top:500.6px" width="7" height="5" viewBox="0 0 7 5"><path d="M0.800 4.100L3.500 1.300L6.200 4.100" fill="none" stroke="#a6a6a6" stroke-width="1.150" stroke-linecap="round" stroke-linejoin="round"/></svg><div class="tb" style="left:431.1px;letter-spacing:-0.40px">Chat</div>
<svg class="ic" style="left:492.500px;top:495.300px" width="19.500" height="14.800" viewBox="0 0 19.500 14.800"><rect x="0.300" y="0.300" width="18.900" height="14.200" rx="2.600" fill="#23d05f"/><path d="M9.750 3.900L12.700 7.200H10.600V10.800H8.900V7.200H6.800z" fill="#1b1b1b"/></svg>
<div class="tb" style="left:501.5px;letter-spacing:-0.28px;color:#25c45c">Share Screen</div>
<svg class="ic" style="left:561px;top:494.800px" width="16.500" height="16.500" viewBox="0 0 16.500 16.500"><circle cx="8.250" cy="8.250" r="7.300" fill="none" stroke="#b6b6b6" stroke-width="1.100"/><circle cx="8.250" cy="8.250" r="5.300" fill="#b6b6b6"/></svg>
<div class="tb" style="left:569.0px;letter-spacing:-0.32px">Record</div>
<svg class="ic" style="left:624.800px;top:495.800px" width="19.500" height="14.200" viewBox="0 0 19.500 14.200"><rect x="0.200" y="0.200" width="19.100" height="13.800" rx="2.200" fill="#b6b6b6"/><text x="9.750" y="10.100" text-anchor="middle" font-family="Liberation Sans,sans-serif" font-weight="bold" font-size="8.400" fill="#2a2a2a">CC</text></svg>
<div class="tb" style="left:634.9px;letter-spacing:-0.09px">Live Transcript</div>
<svg class="ic" style="left:692px;top:493.800px" width="17.500" height="16.500" viewBox="0 0 17.500 16.500"><circle cx="7.300" cy="9.200" r="7" fill="#b6b6b6"/><g fill="#1b1b1b"><circle cx="5" cy="7.700" r="1"/><circle cx="9.600" cy="7.700" r="1"/></g><path d="M4.200 10.600c1.500 1.800 4.700 1.800 6.200 0" stroke="#1b1b1b" stroke-width="1.100" fill="none" stroke-linecap="round"/><path d="M14.300 0.300V5.300M11.800 2.800H16.800" stroke="#b6b6b6" stroke-width="1.300" fill="none"/></svg>
<div class="tb" style="left:699.6px;letter-spacing:-0.23px">Reactions</div>
<svg class="ic" style="left:753.600px;top:497.300px" width="12.800" height="12.800" viewBox="0 0 12.800 12.800"><g fill="none" stroke="#b6b6b6" stroke-width="1.250" stroke-linecap="round"><path d="M0.700 5.800V3.700A3 3 0 0 1 3.700 0.700H6.800"/><path d="M12.100 7V9.100A3 3 0 0 1 9.100 12.100H6"/><circle cx="10.300" cy="2.500" r="1.750"/><circle cx="2.500" cy="10.300" r="1.750"/></g></svg>
<div class="tb" style="left:759.7px;letter-spacing:0.03px">Apps</div>
<div style="position:absolute;left:806px;top:471.6px;font-size:15px;line-height:17px;letter-spacing:-0.01px;color:#787878;white-space:nowrap">Activate Windows</div>
<div style="position:absolute;left:806.5px;top:490px;font-size:11.2px;line-height:14px;letter-spacing:0.01px;color:#777;white-space:nowrap">Go to Settings to activate Windows.</div>
<div style="position:absolute;left:973px;top:500px;width:46px;height:20px;border-radius:5px;background:#b3272b;color:#fff;font-weight:bold;font-size:9.6px;line-height:19.4px;text-align:center">Leave</div>
</div></body></html>
